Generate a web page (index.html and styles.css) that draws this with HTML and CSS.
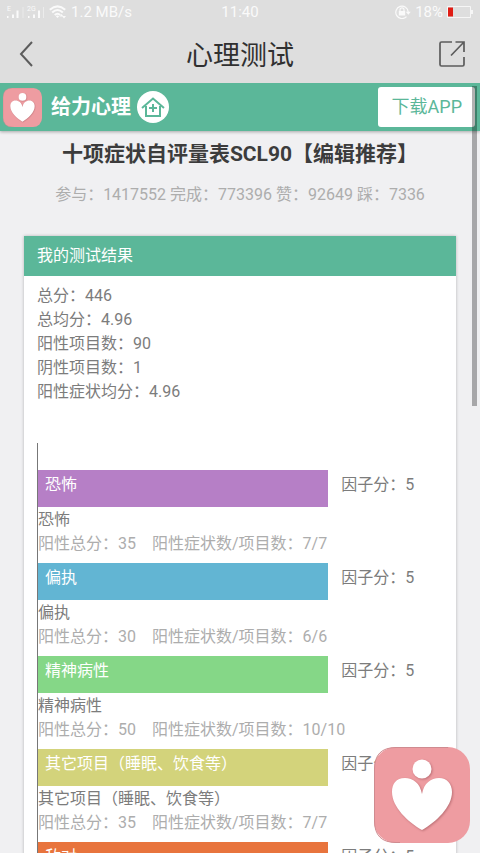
FILE: index.html
```html
<!DOCTYPE html>
<html lang="zh-CN">
<head>
    <meta charset="UTF-8">
    <meta name="viewport" content="width=device-width, initial-scale=1.0">
    <title>心理测试</title>
    <link rel="stylesheet" href="styles.css">
</head>
<body>

<svg class="symbols" aria-hidden="true">
    <symbol id="logo" viewBox="0 0 96 96">
        <rect width="96" height="96" rx="22" fill="#ee9ca1"/>
        <path d="M26 95.500 H22 Q.5 95.500 .5 74 V22 Q.5 .5 22 .5 H74" fill="none" stroke="#cf8b90"/>
        <g class="logo-mark">
            <circle cx="48" cy="22" r="9.500"/>
            <path d="M48 47 C46 36 39 31 31 31 C22 31 18 37 18 45 C18 60 34 75 48 83 C62 75 78 60 78 45 C78 37 73 31 65 31 C57 31 50 36 48 47 Z"/>
        </g>
    </symbol>
</svg>

<div class="app">
    <div class="status-bar">
        <div class="status-left">
            <svg width="38" height="14" viewBox="0 0 38 14">
                <g fill="#fafafa">
                    <path d="M0 11h1.500v2H0zM5 9.500h2V13H5zM9.500 5.500h2V13h-2z"/>
                    <path d="M21 11h1.500v2H21zM26 9.500h2V13h-2zM31 5.500h2V13h-2z"/>
                    <path d="M15.500 2h1v11h-1zM36 2h1v11h-1z" opacity=".5"/>
                </g>
                <text x="0" y="6" class="signal-text">E</text>
                <text x="20" y="6" class="signal-text">2G</text>
            </svg>
            <svg width="18" height="14" viewBox="0 0 18 14">
                <g fill="none" stroke="#fafafa" stroke-width="2">
                    <path d="M.8 4.800Q8.500-2 16.200 4.800M3.200 7.500Q8.500 2.600 13.800 7.500M5.700 10Q8.500 7.400 11.300 10"/>
                </g>
                <path d="M6.800 11.300Q8.500 9.800 10.200 11.300L8.500 13zM12.500 9l2 2.500h-4zM15 13.500l-2-2.500h4z" fill="#fafafa"/>
            </svg>
            <span>1.2 MB/s</span>
        </div>
        <span>11:40</span>
        <div class="status-right">
            <svg width="16" height="14" viewBox="0 0 16 14">
                <path d="M11.500 11.600A6.200 6.200 0 1 1 13.200 7" fill="none" stroke="#fafafa" stroke-width="1.200"/>
                <path d="M10.800 6.800h5l-2.500 3z" fill="#fafafa"/>
                <path d="M3.800 6h6.400v4.500H3.800z" fill="#fafafa"/>
                <path d="M5 6V4.800a2 2 0 0 1 4 0V6" fill="none" stroke="#fafafa" stroke-width="1.200"/>
            </svg>
            <span>18%</span>
            <svg width="26" height="12" viewBox="0 0 26 12">
                <path d="M.5.5h23v11H.5z" fill="none" stroke="#f6f6f6"/>
                <path d="M24 4h2v4h-2z" fill="#f6f6f6"/>
                <path d="M1 1.500h5v9H1z" fill="#e01c14"/>
            </svg>
        </div>
    </div>

    <header class="title-bar">
        <button class="icon-btn" aria-label="返回">
            <svg width="28" height="28" viewBox="0 0 28 28">
                <path d="M18 2L7 14l11 12" fill="none" stroke="#5c5c5c" stroke-width="2"/>
            </svg>
        </button>
        <h1>心理测试</h1>
        <button class="icon-btn" aria-label="分享">
            <svg width="28" height="28" viewBox="0 0 28 28">
                <path d="M14 2H3.500a1.500 1.500 0 0 0-1.500 1.500v21A1.500 1.500 0 0 0 3.500 26h21a1.500 1.500 0 0 0 1.500-1.500V17M17.500 2H26v10M26 2L13 15.500" fill="none" stroke="#5c5c5c" stroke-width="1.700"/>
            </svg>
        </button>
    </header>

    <main class="page">
        <div class="brand-bar">
            <svg class="brand-logo"><use href="#logo"/></svg>
            <span class="brand-name">给力心理</span>
            <a class="home" href="#" aria-label="首页">
                <svg width="32" height="32" viewBox="0 0 32 32">
                    <circle cx="16" cy="16" r="16" fill="#fff"/>
                    <path d="M5 17L16 7.500 27 17M9 15v10h14V15M16 13v8M12 17h8" fill="none" stroke="#5bb799" stroke-width="2"/>
                </svg>
            </a>
            <a class="download" href="#">下载APP</a>
        </div>

        <h2>十项症状自评量表SCL90【编辑推荐】</h2>
        <p class="stats">参与：1417552 完成：773396 赞：92649 踩：7336</p>

        <section class="card">
            <h3>我的测试结果</h3>
            <div class="card-body">
                <p>总分：446</p>
                <p>总均分：4.96</p>
                <p>阳性项目数：90</p>
                <p>阴性项目数：1</p>
                <p>阳性症状均分：4.96</p>

                <div class="chart">
                    <div class="factor">
                        <div class="bar-row"><div class="bar purple">恐怖</div><span>因子分：5</span></div>
                        <p>恐怖</p>
                        <p class="detail"><span>阳性总分：35</span><span>阳性症状数/项目数：7/7</span></p>
                    </div>
                    <div class="factor">
                        <div class="bar-row"><div class="bar blue">偏执</div><span>因子分：5</span></div>
                        <p>偏执</p>
                        <p class="detail"><span>阳性总分：30</span><span>阳性症状数/项目数：6/6</span></p>
                    </div>
                    <div class="factor">
                        <div class="bar-row"><div class="bar green">精神病性</div><span>因子分：5</span></div>
                        <p>精神病性</p>
                        <p class="detail"><span>阳性总分：50</span><span>阳性症状数/项目数：10/10</span></p>
                    </div>
                    <div class="factor">
                        <div class="bar-row"><div class="bar yellow">其它项目（睡眠、饮食等）</div><span>因子分：5</span></div>
                        <p>其它项目（睡眠、饮食等）</p>
                        <p class="detail"><span>阳性总分：35</span><span>阳性症状数/项目数：7/7</span></p>
                    </div>
                    <div class="factor">
                        <div class="bar-row"><div class="bar orange">敌对</div><span>因子分：5</span></div>
                    </div>
                </div>
            </div>
        </section>
    </main>

    <div class="scroll-thumb"></div>
    <button class="float-btn" aria-label="给力心理"><svg><use href="#logo"/></svg></button>
</div>

</body>
</html>
```

FILE: styles.css
```css
* {
    box-sizing: border-box;
}
body {
    margin: 0;
    background: #f0f0f2;
    color: #7c7c7c;
    font-family: Roboto, "Noto Sans CJK SC", sans-serif;
    font-size: 16px;
    line-height: 24px;
}
h1, h2, h3, p {
    margin: 0;
}
button {
    padding: 0;
    border: none;
    background: none;
    cursor: pointer;
}
svg {
    display: block;
}
.symbols {
    position: absolute;
    width: 0;
    height: 0;
}
.app {
    position: relative;
    display: flex;
    flex-direction: column;
    height: 100vh;
    overflow: hidden;
}

/* status bar */
.status-bar {
    display: grid;
    grid-template-columns: 1fr auto 1fr;
    align-items: center;
    padding: 0 7px;
    background: #dedede;
    color: #fafafa;
    font-size: 15px;
}
.status-left, .status-right {
    display: flex;
    align-items: center;
    gap: 4px;
}
.status-right {
    justify-content: flex-end;
}
.signal-text {
    fill: #fafafa;
    font-size: 7px;
}

/* title bar */
.title-bar {
    display: flex;
    align-items: center;
    justify-content: space-between;
    padding: 0 14px;
    height: 59px;
    flex: none;
    background: #dedede;
}
h1 {
    padding-top: 4px;
    color: #303030;
    font-size: 27px;
    font-weight: 400;
    line-height: 36px;
}

.page {
    flex: 1;
    min-height: 0;
    overflow-y: auto;
    scrollbar-width: none;
}
.brand-bar {
    display: flex;
    align-items: center;
    height: 48px;
    padding: 0 5px 0 3px;
    background: #5bb799;
    box-shadow: 0 1px 3px rgba(0,0,0,0.3);
}
.brand-logo {
    width: 39px;
    height: 39px;
}
.logo-mark {
    fill: #fff;
    filter: drop-shadow(1px 1px 1px rgba(140,70,75,0.5));
}
.brand-name {
    margin: 0 6px 0 9px;
    color: #fff;
    font-size: 20px;
    font-weight: 700;
}
.download {
    margin-left: auto;
    padding: 0 13px 0 14px;
    border-radius: 3px;
    background: #fff;
    color: #5bb799;
    font-size: 18px;
    line-height: 40px;
    text-decoration: none;
}
h2 {
    padding-top: 7px;
    color: #3c3c3c;
    font-size: 21px;
    font-weight: 700;
    line-height: 32px;
    text-align: center;
}
.stats {
    margin: 13px 0 29px;
    color: #adadad;
    text-align: center;
}

/* result card */
.card {
    margin: 0 24px;
    background: #fff;
    box-shadow: 0 0 3px rgba(0,0,0,0.25);
}
h3 {
    padding: 8px 13px;
    background: #5bb799;
    color: #fff;
    font-size: 16px;
    font-weight: 400;
}
.card-body {
    padding: 8px 13px;
}
.chart {
    margin-top: 39px;
    padding-top: 27px;
    border-left: 1px solid #777;
}
.factor {
    padding-bottom: 7px;
}
.factor p:nth-child(2) {
    padding-top: 1px;
}
.bar-row {
    display: grid;
    grid-template-columns: 20fr 7fr;
    gap: 13px;
}
.bar-row span {
    padding-top: 3px;
}
.bar {
    height: 37px;
    padding: 3px 7px;
    color: #fff;
}
.purple {
    background: #b67fc6;
}
.blue {
    background: #62b5d3;
}
.green {
    background: #85d787;
}
.yellow {
    background: #d3d37b;
}
.orange {
    background: #e8743d;
}
.detail {
    display: flex;
    gap: 16px;
    color: #adadad;
}

.scroll-thumb {
    position: absolute;
    top: 86px;
    right: 3px;
    width: 5px;
    height: 320px;
    background: rgba(0,0,0,0.3);
}
.float-btn {
    position: absolute;
    right: 10px;
    bottom: 10px;
}
.float-btn svg {
    width: 96px;
    height: 96px;
}
```
